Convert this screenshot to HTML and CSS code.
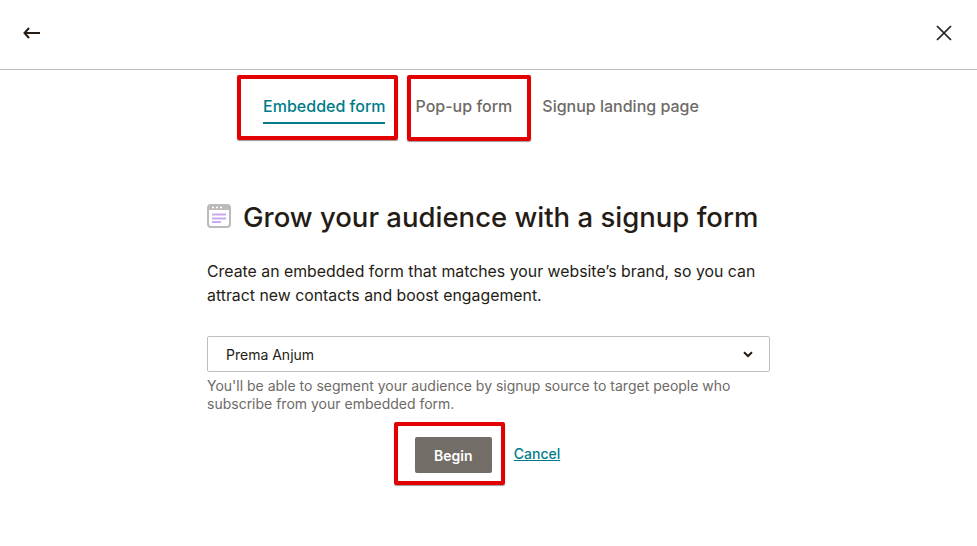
FILE: index.html
```html
<!DOCTYPE html>
<html lang="en">
<head>
  <meta charset="UTF-8" />
  <title>Signup forms</title>
  <link rel="stylesheet" href="styles.css">
</head>
<body>
  <header class="topbar">
    <a class="icon-btn" href="#" aria-label="Back">
      <svg width="17" height="12" viewBox="0 0 17 12"><path d="M6 1 1.500 6 6 11M1.500 6H17" fill="none" stroke="#241c15" stroke-width="2"/></svg>
    </a>
    <a class="icon-btn" href="#" aria-label="Close">
      <svg width="16" height="16" viewBox="0 0 16 16"><path d="M1 1 15 15M15 1 1 15" fill="none" stroke="#241c15" stroke-width="1.700"/></svg>
    </a>
  </header>

  <nav class="tabs">
    <a class="tab active" href="#">Embedded form<span class="mark mark-a"></span></a>
    <a class="tab" href="#">Pop-up form<span class="mark mark-b"></span></a>
    <a class="tab" href="#">Signup landing page</a>
  </nav>

  <main class="panel">
    <div class="title-row">
      <svg class="form-icon" width="24" height="24" viewBox="0 0 24 24">
        <rect x="1" y="1" width="22" height="22" rx="3" fill="#fff" stroke="#bdbbb9" stroke-width="2"/>
        <path d="M1 6V4a3 3 0 0 1 3-3h16a3 3 0 0 1 3 3v2z" fill="#bdbbb9"/>
        <path d="M5 3.500h2M9 3.500h2M13 3.500h2" stroke="#fff" stroke-width="1.600"/>
        <path d="M5 10.500h14M5 14.500h14M5 18h9" stroke="#c9a9f0" stroke-width="2"/>
      </svg>
      <h1>Grow your audience with a signup form</h1>
    </div>
    <p class="lead">Create an embedded form that matches your website’s brand, so you can attract new contacts and boost engagement.</p>
    <div class="select">
      <span>Prema Anjum</span>
      <svg width="10" height="7" viewBox="0 0 10 7"><path d="M1 1.200 5 5 9 1.200" fill="none" stroke="#241c15" stroke-width="2"/></svg>
    </div>
    <p class="hint">You'll be able to segment your audience by signup source to target people who subscribe from your embedded form.</p>
    <div class="actions">
      <div class="begin-wrap">
        <button class="begin">Begin</button>
        <span class="mark mark-c"></span>
      </div>
      <a class="cancel" href="#">Cancel</a>
    </div>
  </main>
</body>
</html>
```

FILE: styles.css
```css
* {
  box-sizing: border-box;
}

body {
  margin: 0;
  min-height: 546px;
  background: #fff;
  color: #241c15;
  font-family: Inter, sans-serif;
}

.topbar {
  height: 70px;
  padding: 0 25px 3px 23px;
  display: flex;
  align-items: center;
  justify-content: space-between;
  border-bottom: 1px solid #c0bfbe;
}

.icon-btn {
  display: flex;
}

.tabs {
  display: flex;
  justify-content: center;
  gap: 30px;
  margin-top: 26px;
  padding-right: 15px;
  height: 28px;
}

.tab {
  position: relative;
  font-size: 16px;
  font-weight: 500;
  line-height: 20px;
  color: #6e6a66;
  text-decoration: none;
}

.tab.active {
  color: #007c89;
  height: 28px;
  border-bottom: 2px solid #007c89;
}

/* red annotation boxes drawn over the screenshot */
.mark {
  position: absolute;
  border: 4px solid #e30000;
  border-radius: 2px;
  box-shadow: 0 1px 1px #0006;
  pointer-events: none;
}

.mark-a {
  left: -26px;
  top: -21px;
  width: 161px;
  height: 65px;
}

.mark-b {
  left: -8px;
  top: -21px;
  width: 124px;
  height: 66px;
}

.mark-c {
  left: -21px;
  top: -15px;
  width: 111px;
  height: 63px;
}

.panel {
  width: 563px;
  margin: 75px auto 0;
}

.title-row {
  display: flex;
  align-items: center;
  gap: 12px;
}

.form-icon {
  flex: none;
  margin-bottom: 2px;
}

h1 {
  margin: 0;
  font-size: 27.5px;
  line-height: 36px;
  font-weight: 500;
}

.lead {
  margin: 25px 0 0;
  font-size: 15.85px;
  line-height: 24px;
}

.select {
  height: 36px;
  margin-top: 28px;
  padding: 0 16px 0 18px;
  display: flex;
  align-items: center;
  justify-content: space-between;
  border: 1px solid #c0bfbe;
  border-radius: 2px;
  font-size: 14px;
}

.hint {
  margin: 5px 0 0;
  font-size: 14px;
  line-height: 18px;
  color: #6e6a66;
}

.actions {
  display: flex;
  align-items: center;
  justify-content: center;
  gap: 22px;
  margin-top: 24px;
  padding-right: 2px;
}

.begin-wrap {
  position: relative;
  display: flex;
}

.begin {
  width: 77px;
  height: 36px;
  border: none;
  border-radius: 2px;
  background: #736d67;
  color: #fff;
  font: 600 14px Inter, sans-serif;
}

.cancel {
  font-size: 14px;
  font-weight: 500;
  line-height: 16px;
  margin-bottom: 2px;
  color: #007c89;
}
```
